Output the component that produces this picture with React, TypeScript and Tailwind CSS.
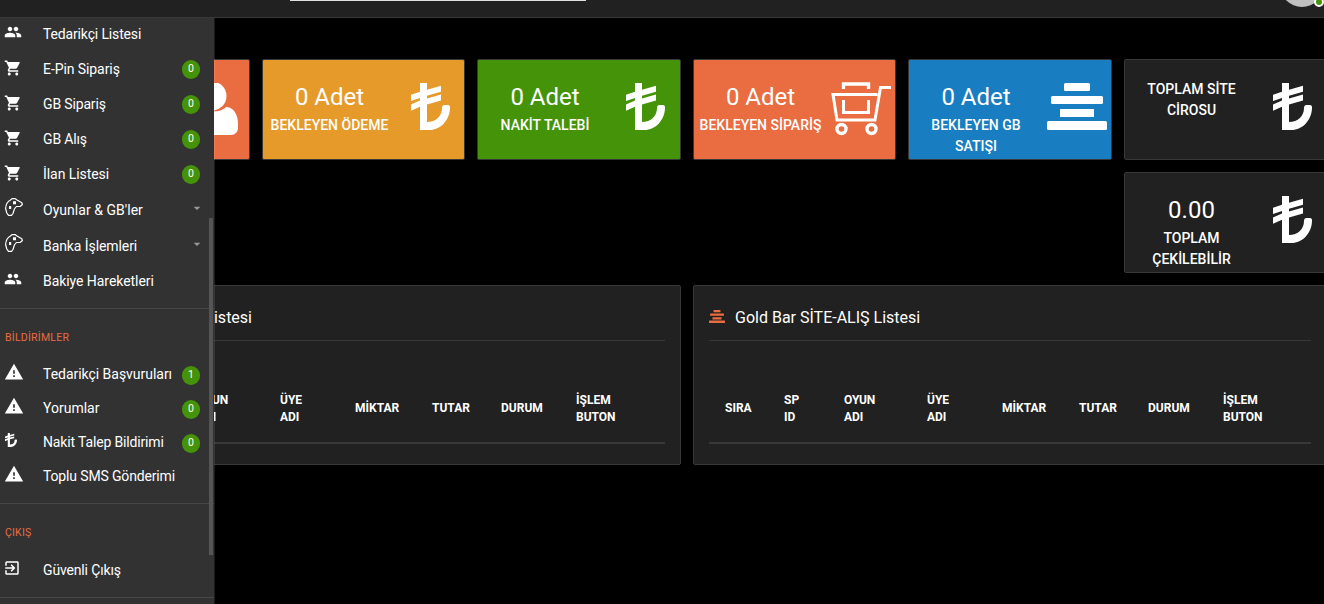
import React from "react";
import { MdPeople, MdShoppingCart, MdWarning, MdExitToApp, MdArrowDropDown } from "react-icons/md";

type IconName = "people" | "cart" | "pad" | "warning" | "lira" | "exit";

const Lira = ({ className }: { className: string }) => (
  <svg viewBox="0 0 39 47" className={className} fill="currentColor" preserveAspectRatio="none">
    <path d="M9 0h7v6.800l14-4v6l-14 4v2.600l14-4v6l-14 4V39c9 0 15-6 15-14 0-1.900 1-3 2.500-3H37c1.500 0 2 1 2 2.500C39 37 29.500 47 18.500 47H9V23.800l-9 4v-6.400l9-3.800v-2.600L0 18v-6.200l9-3z" />
  </svg>
);

const GoldBars = ({ className }: { className: string }) => (
  <svg viewBox="0 0 60 47" className={className} fill="currentColor" preserveAspectRatio="none">
    <rect x="17" y="0" width="26" height="8" rx="1.500" />
    <rect x="4" y="13" width="52" height="8" rx="1.500" />
    <rect x="13" y="26" width="34" height="8" rx="0.500" />
    <rect x="0" y="38" width="60" height="9" rx="1.500" />
  </svg>
);

const BasketCart = () => (
  <svg viewBox="0 0 60 54" className="-mt-px h-[54px] w-[60px]" fill="none" stroke="currentColor" strokeWidth="3">
    <path d="M12.500 7V2h25v5" strokeWidth="3.400" />
    <path d="M12.500 18v12.500h25V18" />
    <path d="M60 5.500H49.500L44 38H6L2 12.500h44.500" />
    <circle cx="10.500" cy="47" r="4.500" strokeWidth="3.400" />
    <circle cx="40.500" cy="47" r="4.500" strokeWidth="3.400" />
  </svg>
);

const Person = () => (
  <svg viewBox="0 0 54 52" className="h-[52px] w-[54px]" fill="currentColor">
    <circle cx="28" cy="13" r="14.500" />
    <path d="M0 41c0-10 4-18 12-18 4 4 8 5.500 15 5.500S38 28 42 24c8 0 12 8 12 17v4c0 4-3 7-7 7H7c-4 0-7-3-7-7z" />
  </svg>
);

const Gamepad = () => (
  <svg viewBox="0 0 18 18" className="h-[18px] w-[18px]" fill="none" stroke="currentColor" strokeWidth="1.200" strokeLinejoin="round">
    <path d="M.6 10.500C.8 7 2.500 3.500 5.500 2L7 .6h3l2 1.400 4.800 2.800.6 1.700-2 1.800-4 .2-2 2.500L8 15.500l-1.500 1.900h-3L1.800 15z" />
    <path d="M8 3.200h3v3H8zM4 8h2.200v3H4z" fill="currentColor" stroke="none" />
  </svg>
);

function MenuIcon({ name }: { name: IconName }) {
  switch (name) {
    case "people":
      return <MdPeople className="h-[18px] w-[18px]" />;
    case "cart":
      return <MdShoppingCart className="h-[18px] w-[18px]" />;
    case "pad":
      return <Gamepad />;
    case "warning":
      return <MdWarning className="h-5 w-5" />;
    case "lira":
      return <Lira className="h-[14px] w-3" />;
    case "exit":
      return <MdExitToApp className="h-[18px] w-[18px]" />;
  }
}

type ItemProps = {
  icon: IconName;
  label: string;
  height: string;
  iconBox: string;
  badge?: string;
  badgeMargin?: string;
  tracking?: string;
  caret?: boolean;
};

function Item({
  icon,
  label,
  height,
  iconBox,
  badge,
  badgeMargin = "mt-px",
  tracking = "tracking-[-0.15px]",
  caret,
}: ItemProps) {
  return (
    <li className={`flex shrink-0 items-center ${height}`}>
      <span className={`flex w-[43px] shrink-0 items-center ${iconBox}`}>
        <MenuIcon name={icon} />
      </span>
      <span className={`flex-1 whitespace-nowrap text-sm leading-5 ${tracking}`}>{label}</span>
      {badge && (
        <span
          className={`mr-[14px] flex h-[19px] w-[18px] shrink-0 items-center justify-center rounded-full bg-[#449309] text-[10.500px] leading-none ${badgeMargin}`}
        >
          {badge}
        </span>
      )}
      {caret && <MdArrowDropDown className="mr-[9px] mb-[5px] h-4 w-4 text-[#999]" />}
    </li>
  );
}

function Sidebar() {
  return (
    <aside className="relative flex w-[214px] shrink-0 flex-col overflow-hidden bg-[#323232]">
      <ul className="flex flex-col">
        <Item icon="people" label="Tedarikçi Listesi" height="h-8" iconBox="pl-1 pb-[4px]" />
        <Item icon="cart" label="E-Pin Sipariş" height="h-[37px]" iconBox="pl-1 pb-[2px]" tracking="tracking-[-0.08px]" badge="0" badgeMargin="mt-[2px]" />
        <Item icon="cart" label="GB Sipariş" height="h-[33px]" iconBox="pl-1 pb-[2px]" badge="0" badgeMargin="mt-[2px]" />
        <Item icon="cart" label="GB Alış" height="h-[37px]" iconBox="pl-1 pb-[2px]" badge="0" badgeMargin="mt-[2px]" />
        <Item icon="cart" label="İlan Listesi" height="h-[33px]" iconBox="pl-1 pb-[2px]" tracking="tracking-[-0.06px]" badge="0" badgeMargin="mt-[2px]" />
        <Item icon="pad" label="Oyunlar &amp; GB'ler" height="h-10" iconBox="pl-[5px] pb-[6px]" tracking="tracking-[0.03px]" caret />
        <Item icon="pad" label="Banka İşlemleri" height="h-8" iconBox="pl-[5px] pb-[6px]" tracking="tracking-[-0.08px]" caret />
        <Item icon="people" label="Bakiye Hareketleri" height="h-[38px]" iconBox="pl-1 pb-1" tracking="tracking-[-0.06px]" />
      </ul>
      <div className="mt-[8px] h-px shrink-0 bg-[#474747]" />
      <h6 className="mt-[21px] pl-[5px] text-[10.500px] leading-4 tracking-[0.25px] text-[#ea6c41]">BİLDİRİMLER</h6>
      <ul className="mt-[11px] flex flex-col">
        <Item icon="warning" label="Tedarikçi Başvuruları" height="h-[34px]" iconBox="pl-1 pb-[5px]" tracking="tracking-[-0.03px]" badge="1" badgeMargin="mt-[3px]" />
        <Item icon="warning" label="Yorumlar" height="h-[34px]" iconBox="pl-1 pb-[5px]" tracking="tracking-normal" badge="0" badgeMargin="mt-[3px]" />
        <Item icon="lira" label="Nakit Talep Bildirimi" height="h-[34px]" iconBox="pl-[5px] pb-1" badge="0" badgeMargin="mt-[3px]" />
        <Item icon="warning" label="Toplu SMS Gönderimi" height="h-[34px]" iconBox="pl-1 pb-[5px]" />
      </ul>
      <div className="mt-[10px] h-px shrink-0 bg-[#474747]" />
      <h6 className="mt-[21px] pl-[5px] text-[10.500px] leading-4 tracking-[0.2px] text-[#ea6c41]">ÇIKIŞ</h6>
      <ul className="mt-[12px] flex flex-col">
        <Item icon="exit" label="Güvenli Çıkış" height="h-[34px]" iconBox="pl-[3px] pb-[5px]" />
      </ul>
      <div className="mt-[10px] h-px shrink-0 bg-[#474747]" />
      <div className="absolute right-[1px] top-[200px] h-[337px] w-1 bg-[#555]" />
    </aside>
  );
}

type CardProps = {
  color: string;
  value?: string;
  label: string;
  textPad?: string;
  iconPad: string;
  children: React.ReactNode;
  place?: string;
};

function StatCard({ color, value, label, textPad = "", iconPad, children, place = "" }: CardProps) {
  return (
    <div className={`flex h-[101px] overflow-hidden rounded-[2px] border border-[#383838] ${color} ${place}`}>
      <div className={`flex w-[134px] shrink-0 flex-col items-center pt-[19px] text-center ${textPad}`}>
        {value && <div className="h-9 text-2xl leading-9">{value}</div>}
        <div className="text-sm font-medium leading-[21px]">{label}</div>
      </div>
      <div className={`pt-[23px] ${iconPad}`}>{children}</div>
    </div>
  );
}

const columns = [
  { lines: ["SIRA"], width: "w-[59px]" },
  { lines: ["SP", "ID"], width: "w-[60px]" },
  { lines: ["OYUN", "ADI"], width: "w-[83px]" },
  { lines: ["ÜYE", "ADI"], width: "w-[75px]" },
  { lines: ["MİKTAR"], width: "w-[77px]" },
  { lines: ["TUTAR"], width: "w-[69px]" },
  { lines: ["DURUM"], width: "w-[75px]" },
  { lines: ["İŞLEM", "BUTON"], width: "w-[60px]" },
];

function Panel({ title, titleClass = "" }: { title: string; titleClass?: string }) {
  return (
    <section className="h-[180px] rounded-[2px] border border-[#383838] bg-[#212121] px-[15px]">
      <div className="flex h-[55px] items-center border-b border-[#383838] pt-[7px]">
        <GoldBars className="mr-[10px] h-[13px] w-4 text-[#ea6c41]" />
        <h4 className={`mt-[2px] whitespace-nowrap text-base ${titleClass}`}>{title}</h4>
      </div>
      <div className="mt-[34px] flex h-[69px] items-center border-b-2 border-[#383838] pl-4 text-xs font-bold leading-[17px]">
        {columns.map((c) => (
          <div key={c.lines.join()} className={`shrink-0 ${c.width}`}>
            {c.lines.map((l) => (
              <div key={l}>{l}</div>
            ))}
          </div>
        ))}
      </div>
    </section>
  );
}

export default function App() {
  return (
    <div className="flex h-[604px] w-[1324px] flex-col overflow-hidden bg-black font-['Roboto',sans-serif] text-white">
      <header className="flex h-[18px] shrink-0 items-start justify-between border-b border-[#383838] bg-[#212121] pl-[290px]">
        <div className="h-px w-[296px] bg-[#dfe1e1]" />
        <div className="relative h-[17px] w-11 overflow-hidden">
          <div className="absolute -top-[37px] left-0 h-11 w-11 rounded-full bg-[#bfbfbf]" />
          <div className="absolute -top-[3px] left-[34px] h-[10px] w-[10px] rounded-full border-2 border-white bg-[#449309]" />
        </div>
      </header>
      <div className="flex min-h-0 flex-1">
        <Sidebar />
        <main className="relative min-w-0 flex-1 overflow-hidden">
          <div className="absolute inset-y-0 left-0 w-px bg-white/10" />
          <div className="-ml-[168px] mt-[41px] flex w-[1281px] flex-col gap-3">
            <div className="grid grid-cols-6 gap-3">
              <StatCard color="bg-[#ea6c41]" value="0 Adet" label="ONAY BEKLEYEN" iconPad="pl-[3px]">
                <Person />
              </StatCard>
              <StatCard color="bg-[#e69a2a]" value="0 Adet" label="BEKLEYEN ÖDEME" iconPad="pl-[14px]">
                <Lira className="h-[47px] w-[39px]" />
              </StatCard>
              <StatCard color="bg-[#449309]" value="0 Adet" label="NAKİT TALEBİ" iconPad="pl-[14px]">
                <Lira className="h-[47px] w-[39px]" />
              </StatCard>
              <StatCard color="bg-[#ea6c41]" value="0 Adet" label="BEKLEYEN SİPARİŞ" iconPad="pl-[3px]">
                <BasketCart />
              </StatCard>
              <StatCard color="bg-[#187dc1]" value="0 Adet" label="BEKLEYEN GB SATIŞI" textPad="px-3" iconPad="pl-[4px]">
                <GoldBars className="h-[47px] w-[60px]" />
              </StatCard>
              <StatCard color="bg-[#212121]" label="TOPLAM SİTE CİROSU" textPad="px-3" iconPad="pl-[14px]">
                <Lira className="h-[47px] w-[39px]" />
              </StatCard>
              <StatCard color="bg-[#212121]" value="0.00" label="TOPLAM ÇEKİLEBİLİR" textPad="px-3" iconPad="pl-[14px]" place="col-start-6">
                <Lira className="h-[47px] w-[39px]" />
              </StatCard>
            </div>
            <div className="grid grid-cols-[635px_634px] gap-3">
              <Panel title="Gold Bar Satış Listesi" titleClass="w-[164px] text-right" />
              <Panel title="Gold Bar SİTE-ALIŞ Listesi" />
            </div>
          </div>
        </main>
      </div>
    </div>
  );
}
